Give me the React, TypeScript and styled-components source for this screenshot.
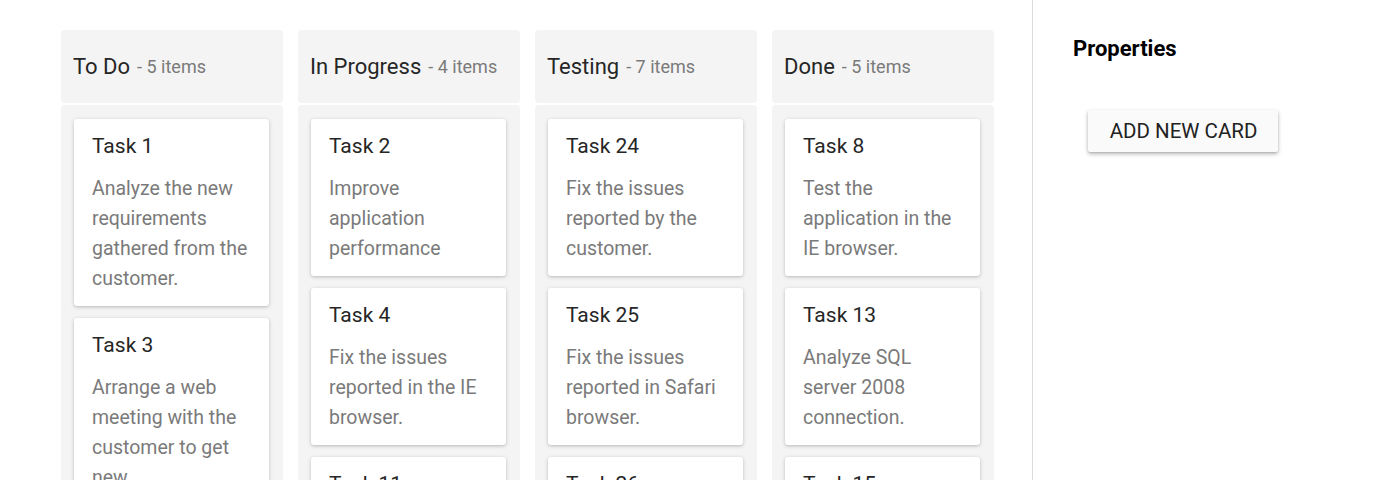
import React from "react";
import styled, { createGlobalStyle } from "styled-components";

const Global = createGlobalStyle`
  html, body { margin: 0; padding: 0; background: #fff; }
  body { font-family: Roboto, "Noto Sans", Arial, sans-serif; }
  * { box-sizing: border-box; }
`;

const Page = styled.div`
  display: flex;
  align-items: flex-start;
  min-height: 480px;
`;

const Board = styled.div`
  width: 1033px;
  flex: none;
  padding: 30px 38px 0 61px;
  border-right: 1px solid #dcdcdc;
  align-self: stretch;
  display: flex;
  align-items: flex-start;
  gap: 15px;
  height: 480px;
  overflow: hidden;
`;

const Column = styled.div`
  width: 222px;
  flex: none;
  display: flex;
  flex-direction: column;
  gap: 2px;
`;

const Header = styled.div`
  flex: none;
  height: 73px;
  background: #f4f4f4;
  border-radius: 4px;
  display: flex;
  align-items: center;
  padding: 0 12px 1px;
  white-space: nowrap;
`;

const HeaderTitle = styled.span`
  font-size: 22px;
  color: #262626;
`;

const HeaderCount = styled.span`
  font-size: 18px;
  color: #7a7a7a;
  margin-left: 7px;
`;

const Content = styled.div`
  flex: none;
  background: #f4f4f4;
  border-radius: 4px;
  padding: 14px 14px 14px 13px;
  display: flex;
  flex-direction: column;
  gap: 12px;
`;

const Card = styled.div`
  background: #fff;
  border-radius: 3px;
  box-shadow: 0 1px 4px rgba(0, 0, 0, 0.18), 0 1px 2px rgba(0, 0, 0, 0.08);
  padding: 12px 18px 12px;
`;

const CardTitle = styled.div`
  font-size: 21px;
  line-height: 30px;
  color: #262626;
`;

const CardText = styled.div`
  margin-top: 13px;
  font-size: 19.5px;
  line-height: 30px;
  color: #7a7a7a;
`;

const Sidebar = styled.div`
  padding: 34px 40px 0;
  display: flex;
  flex-direction: column;
  align-items: flex-start;
`;

const SideTitle = styled.div`
  font-size: 22px;
  font-weight: 700;
  color: #000;
  line-height: 30px;
`;

const AddButton = styled.button`
  margin: 46px 0 0 15px;
  height: 42px;
  width: 190px;
  border: none;
  border-radius: 2px;
  background: #fafafa;
  box-shadow: 0 2px 4px rgba(0, 0, 0, 0.28), 0 1px 2px rgba(0, 0, 0, 0.1);
  font-family: Roboto, Arial, sans-serif;
  font-size: 20.5px;
  color: #212121;
  text-transform: uppercase;
  padding: 0 0 0 1px;
  cursor: pointer;
`;

const columns = [
  {
    title: "To Do",
    count: 5,
    cards: [
      { t: "Task 1", d: "Analyze the new requirements gathered from the customer." },
      { t: "Task 3", d: "Arrange a web meeting with the customer to get new requirements." },
      { t: "Task 5", d: "Fix the issues reported in the IE browser." },
    ],
  },
  {
    title: "In Progress",
    count: 4,
    cards: [
      { t: "Task 2", d: "Improve application performance" },
      { t: "Task 4", d: "Fix the issues reported in the IE browser." },
      { t: "Task 11", d: "Check the login page validation." },
    ],
  },
  {
    title: "Testing",
    count: 7,
    cards: [
      { t: "Task 24", d: "Fix the issues reported by the customer." },
      { t: "Task 25", d: "Fix the issues reported in Safari browser." },
      { t: "Task 26", d: "Test the application in the Safari browser." },
    ],
  },
  {
    title: "Done",
    count: 5,
    cards: [
      { t: "Task 8", d: "Test the application in the IE browser." },
      { t: "Task 13", d: "Analyze SQL server 2008 connection." },
      { t: "Task 15", d: "Login page validation." },
    ],
  },
];

export default function App() {
  return (
    <>
      <Global />
      <Page>
        <Board>
          {columns.map((c) => (
            <Column key={c.title}>
              <Header>
                <HeaderTitle>{c.title}</HeaderTitle>
                <HeaderCount>- {c.count} items</HeaderCount>
              </Header>
              <Content>
                {c.cards.map((k) => (
                  <Card key={k.t}>
                    <CardTitle>{k.t}</CardTitle>
                    <CardText>{k.d}</CardText>
                  </Card>
                ))}
              </Content>
            </Column>
          ))}
        </Board>
        <Sidebar>
          <SideTitle>Properties</SideTitle>
          <AddButton>Add New Card</AddButton>
        </Sidebar>
      </Page>
    </>
  );
}
